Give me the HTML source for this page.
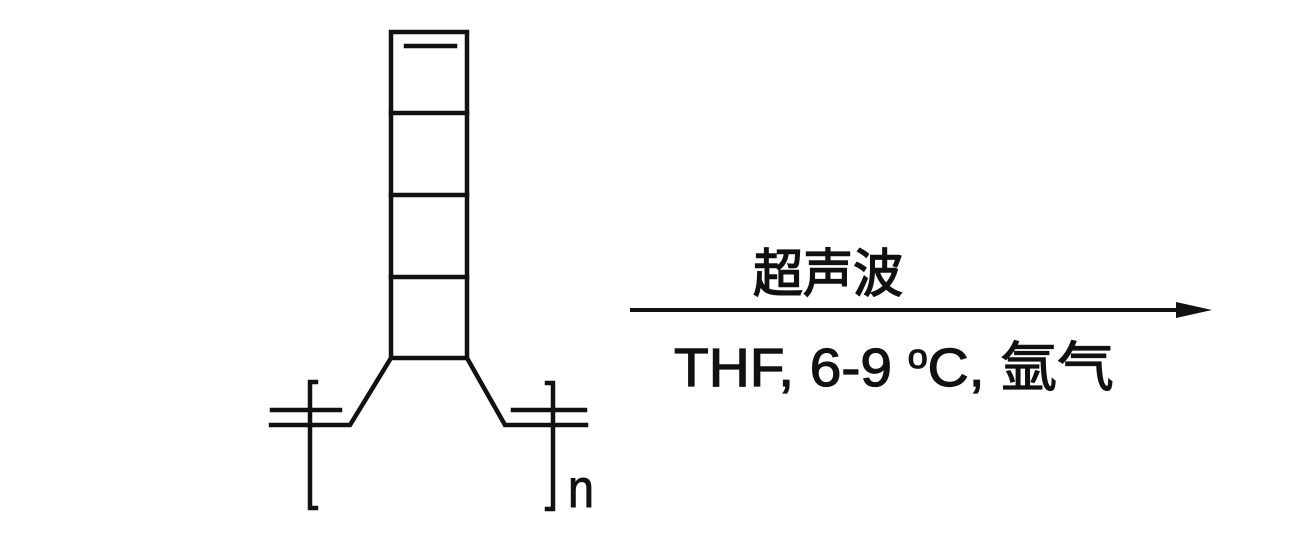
<!DOCTYPE html>
<html><head><meta charset="utf-8"><style>
html,body{margin:0;padding:0;background:#fff;width:1312px;height:542px;overflow:hidden}
</style></head><body>
<svg width="1312" height="542" viewBox="0 0 1312 542" xmlns="http://www.w3.org/2000/svg">
<g fill="none" stroke="#111" stroke-width="4.5" stroke-linecap="square">
<rect x="391" y="32" width="76" height="326"/>
<line x1="391" y1="113" x2="467" y2="113"/>
<line x1="391" y1="195" x2="467" y2="195"/>
<line x1="391" y1="277" x2="467" y2="277"/>
<line x1="406" y1="46" x2="455" y2="46"/>
<polyline points="391,358 350,425 271,425"/>
<line x1="272" y1="410" x2="340" y2="410"/>
<polyline points="316,382 310,382 310,508 316,508"/>
<polyline points="467,358 505,425 586,425"/>
<line x1="513" y1="410" x2="585" y2="410"/>
<polyline points="547,383 553,383 553,509 547,509"/>
<line x1="632" y1="310" x2="1190" y2="310" stroke-width="4"/>
</g>
<polygon points="1176,302 1212,310 1176,318" fill="#111"/>
<text x="568" y="507" font-family="Liberation Sans, sans-serif" font-size="54" fill="#111" stroke="#111" stroke-width="1" textLength="26" lengthAdjust="spacingAndGlyphs">n</text>
<text x="753" y="292" font-family="Liberation Sans, 'Noto Sans CJK SC', sans-serif" font-size="52" fill="#111" stroke="#111" stroke-width="1.5" textLength="150" lengthAdjust="spacingAndGlyphs">超声波</text>
<text x="674" y="386" font-family="Liberation Sans, 'Noto Sans CJK SC', sans-serif" font-size="54" fill="#111" stroke="#111" stroke-width="1.2" textLength="440" lengthAdjust="spacingAndGlyphs">THF, 6-9 <tspan font-size="34" dy="-18">o</tspan><tspan dy="18">C, 氩气</tspan></text>
</svg>
</body></html>
